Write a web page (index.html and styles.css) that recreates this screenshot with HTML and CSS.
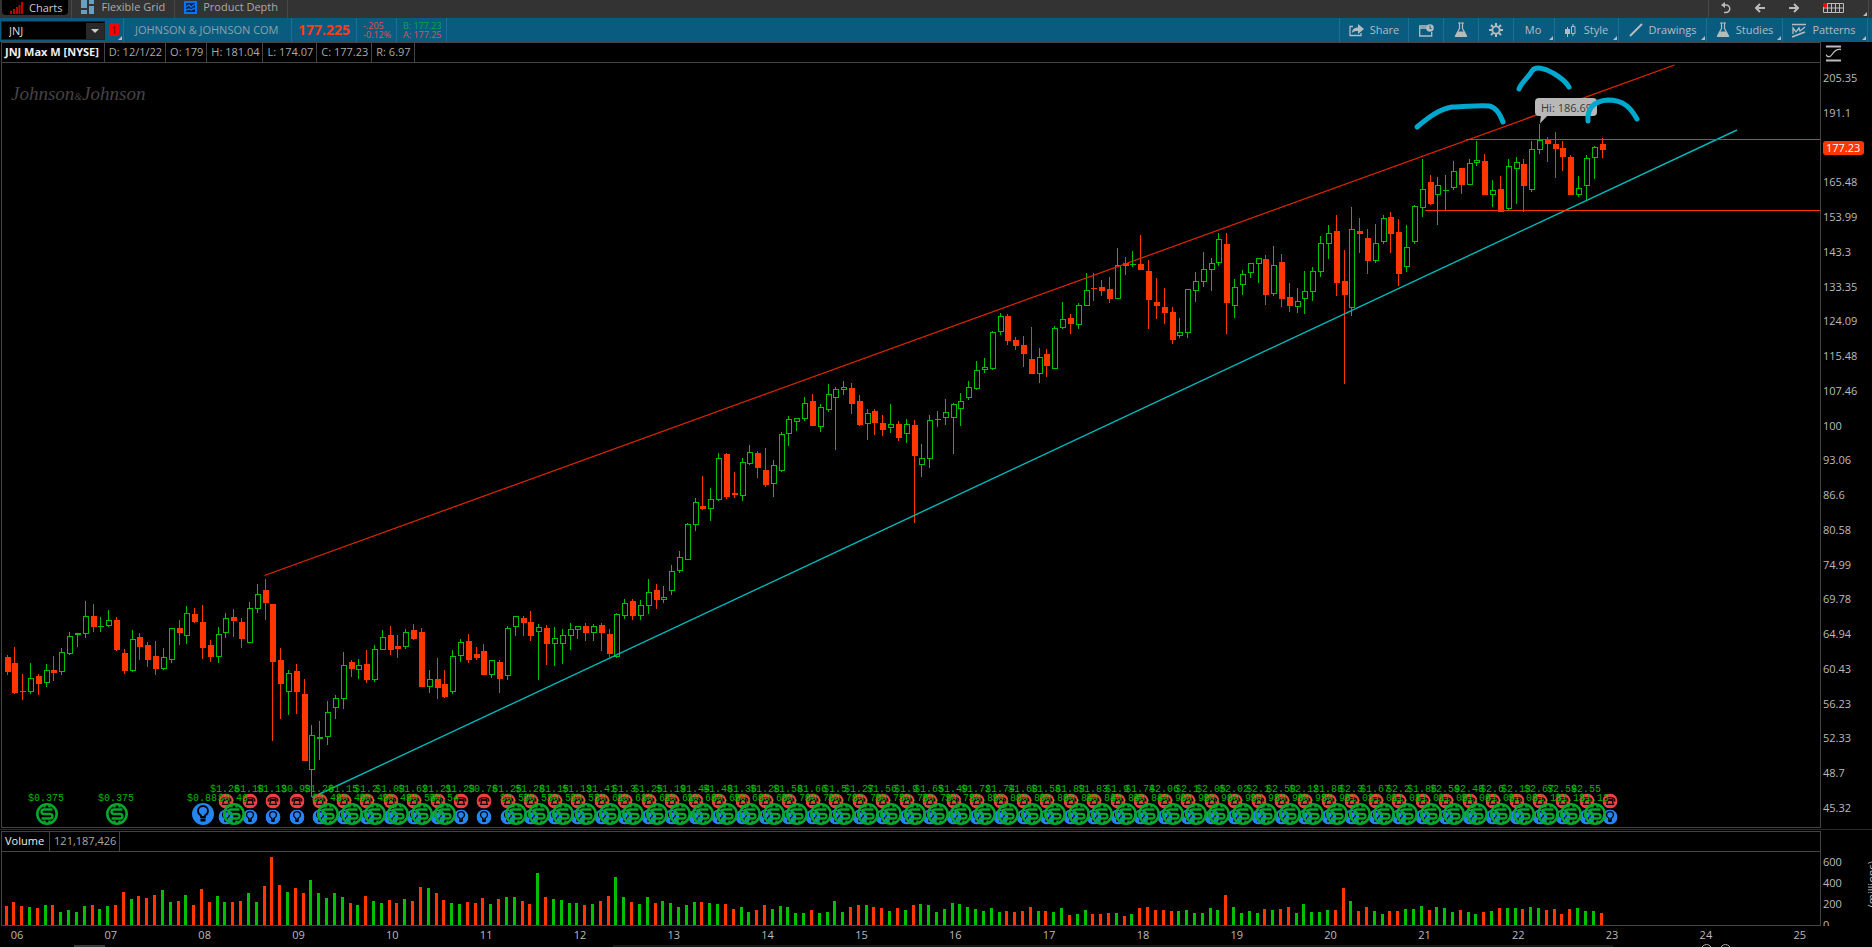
FILE: index.html
```html
<!DOCTYPE html>
<html lang="en">
<head>
  <meta charset="UTF-8">
  <title>JNJ - Charts</title>
  <meta name="viewport" content="width=device-width, initial-scale=1.0">
  <link rel="stylesheet" href="styles.css">
</head>
<body>
  <!-- shared icons -->
  <svg class="sprite" aria-hidden="true">
    <symbol id="flask" viewBox="0 0 14 16">
      <path d="M4 1h6M5.500 1.500v5L1.500 14h11L8.500 6.500v-5" fill="none" stroke="currentColor" stroke-width="1.200"/>
      <path d="M4 9.500h6l3 5.500H1z" fill="currentColor"/>
    </symbol>
    <symbol id="dividend" viewBox="-11 -11 22 22">
      <circle r="9.700" fill="none" stroke="#04a82c" stroke-width="2.600"/>
      <path d="M5.500 -4.500H-3Q-5.500 -4.500 -5.500 -2.300T-3 0H3Q5.500 0 5.500 2.300T3 4.500H-5.500M-2.500 -9v2.500M2.500 -9v2.500M-2.500 6.500v2.500M2.500 6.500v2.500" fill="none" stroke="#04a82c" stroke-width="2.400"/>
    </symbol>
    <symbol id="bulb" viewBox="-11 -11 22 22">
      <circle r="11" fill="#2484f0"/>
      <path d="M-2 3V1.500C-4.500 0 -5 -2 -5 -3A5 5 0 0 1 5 -3C5 -2 4.500 0 2 1.500V3z" fill="none" stroke="#000" stroke-width="1.800"/>
      <path d="M-2.500 4.500h5v3h-5z" fill="#000"/>
    </symbol>
    <symbol id="phone" viewBox="-11 -11 22 22">
      <circle r="11" fill="#ee4040"/>
      <path d="M-7 -2C-6 -6 6 -6 7 -2V0H4V-2H-4V0H-7zM-5 5L-3 -1H3L5 5z" fill="none" stroke="#1a0000" stroke-width="1.800"/>
    </symbol>
  </svg>

  <header class="topbar">
    <nav class="tabs">
      <a class="tab active" href="#">
        <svg width="13" height="12" viewBox="0 0 13 12"><path d="M1 12V9M4 12V7M7 12V5M9.500 12V3M12 12V0" stroke="#c00000" stroke-width="2"/></svg>
        Charts
      </a>
      <a class="tab" href="#">
        <svg width="14" height="14" viewBox="0 0 14 14" fill="#6a9fc0"><path d="M0 0h6v8H0zM8 0h5v4H8zM0 10h6v4H0zM8 6h5v8H8z"/></svg>
        Flexible Grid
      </a>
      <a class="tab" href="#">
        <svg width="13" height="13" viewBox="0 0 13 13"><rect x="1" y="1" width="11" height="11" fill="#04204c" stroke="#0a74f0" stroke-width="2"/><path d="M2 6l3-2 2 2 4-3M2 9l3-1 2 1 4-2" fill="none" stroke="#0a74f0" stroke-width="1.500"/></svg>
        Product Depth
      </a>
    </nav>
    <div class="history">
      <button aria-label="Undo"><svg width="10" height="12" viewBox="0 0 10 12"><path d="M2 3h3a3.500 3.500 0 0 1 0 7.500H3" fill="none" stroke="#bbb" stroke-width="1.500"/><path d="M0 3l4-3v6z" fill="#bbb"/></svg></button>
      <button aria-label="Back"><svg width="10" height="10" viewBox="0 0 10 10"><path d="M1 5h9M5 1L1 5l4 4" fill="none" stroke="#bbb" stroke-width="2"/></svg></button>
      <button aria-label="Forward"><svg width="10" height="10" viewBox="0 0 10 10"><path d="M0 5h9M5 1l4 4-4 4" fill="none" stroke="#bbb" stroke-width="2"/></svg></button>
      <button class="layout corner" aria-label="Grid layout"><svg width="21" height="10" viewBox="0 0 21 10"><path d="M.5 .5h20v9H.5zM.5 5h20M4.500 .5v9M8.500 .5v9M12.500 .5v9M16.500 .5v9" fill="none" stroke="#bbb"/><path d="M0 0h4v4H0z" fill="#f00"/></svg></button>
    </div>
  </header>

  <div class="toolbar">
    <div class="symbol-box">
      <input type="text" value="JNJ" aria-label="Symbol">
      <button aria-label="Choose symbol"></button>
    </div>
    <button class="link-badge corner"><span>1</span></button>
    <div class="company">JOHNSON &amp; JOHNSON COM</div>
    <div class="last">177.225</div>
    <div class="quote down"><span>-.205</span><span>-0.12%</span></div>
    <div class="quote wide"><span class="bid">B: 177.23</span><span class="ask">A: 177.25</span></div>

    <div class="tools">
      <button class="share"><svg width="15" height="13" viewBox="0 0 15 13"><path d="M4 2.500H1v9h11V9" fill="none" stroke="currentColor" stroke-width="1.300"/><path d="M3 9c0-4 3-5.500 6-5.500V0l6 5-6 5V7C6 7 4 7.500 3 9z" fill="currentColor"/></svg>Share</button>
      <button class="square" aria-label="Calendar"><svg width="15" height="13" viewBox="0 0 15 13"><path d="M8 2H.7v10h12V8M1 4h7" fill="none" stroke="currentColor" stroke-width="1.300"/><circle cx="11" cy="4" r="3.800" fill="currentColor"/><path d="M11 1.500V4.500h1.500" fill="none" stroke="#0a5b80"/></svg></button>
      <button class="square" aria-label="Edit studies"><svg width="14" height="16"><use href="#flask"/></svg></button>
      <button class="square" aria-label="Settings"><svg width="14" height="14" viewBox="-7 -7 14 14"><circle r="3.600" fill="none" stroke="currentColor" stroke-width="1.800"/><path d="M0-7v3M0 7V4M-7 0h3M7 0H4M-5-5l2 2M5 5L3 3M-5 5l2-2M5-5L3-3" stroke="currentColor" stroke-width="2"/></svg></button>
      <button class="corner period">Mo</button>
      <button class="corner style"><svg width="11" height="13" viewBox="0 0 11 13"><path d="M2.500 3v10M8 0v3M8 9v3" stroke="currentColor"/><path d="M0 5h5v5H0z" fill="currentColor"/><path d="M6.500 2.500h3.500v7H6.500z" fill="none" stroke="currentColor"/></svg>Style</button>
      <button class="corner drawings"><svg width="14" height="14" viewBox="0 0 14 14"><path d="M1 13L13 1" stroke="currentColor" stroke-width="2"/></svg>Drawings</button>
      <button class="corner studies"><svg width="14" height="16"><use href="#flask"/></svg>Studies</button>
      <button class="corner patterns"><svg width="14" height="15" viewBox="0 0 14 15"><path d="M0 1.500h14M0 14l13-5" stroke="currentColor" stroke-width="1.700"/><path d="M1 11V5l3 4 3-4 1 3 5-4" fill="none" stroke="currentColor" stroke-width="1.300"/></svg>Patterns</button>
    </div>
  </div>

  <main>
    <section class="row price-row">
      <div class="pane">
        <div class="pane-head">
          <strong>JNJ Max M [NYSE]</strong>
          <span>D: 12/1/22</span><span>O: 179</span><span>H: 181.04</span><span>L: 174.07</span><span>C: 177.23</span><span>R: 6.97</span>
        </div>
        <svg id="price" class="plot" viewBox="2 63 1818 764" preserveAspectRatio="none" role="img" aria-label="JNJ monthly price">
          <text class="brand" x="11" y="100">Johnson<tspan class="amp">&amp;</tspan>Johnson</text>
          <g id="candles" shape-rendering="crispEdges"></g>
          <g class="trend">
            <path class="resistance" d="M264.500 575.500L1674.500 65"/>
            <path class="support" d="M312 797.500L1737 130"/>
            <path class="level" d="M1466 139.500H1820M1425 210.500H1820"/>
          </g>
          <g id="events"></g>
          <g class="callout">
            <path d="M1540 123.500L1541 115H1548z"/>
            <rect x="1535" y="98" width="62" height="18" rx="4"/>
            <text x="1541" y="112">Hi: 186.69</text>
          </g>
          <g class="brush">
            <path d="M1417 127C1430 116 1440 109 1452 107C1466 107 1476 105 1489 106C1496 107 1500 114 1503 122"/>
            <path d="M1519 89C1521 83 1528 78 1532 71C1535 66 1545 68 1553 73C1560 77 1566 82 1569 87"/>
            <path d="M1588 121C1587 108 1594 101 1608 100C1624 100 1631 108 1637 119"/>
          </g>
        </svg>
      </div>
      <div class="axis">
        <button class="axis-tool" aria-label="Price axis settings"><svg width="15" height="17" viewBox="0 0 15 17"><path d="M0 1.500h15M0 15.500h15" stroke="#bbb" stroke-width="2"/><path d="M0 9.500c1 3 4 3 6 0s5-6 9-5" fill="none" stroke="#bbb" stroke-width="1.300"/></svg></button>
        <div class="scale">
          <span>205.35</span><span>191.1</span><span class="current">177.23</span><span>165.48</span><span>153.99</span><span>143.3</span><span>133.35</span><span>124.09</span><span>115.48</span><span>107.46</span><span>100</span><span>93.06</span><span>86.6</span><span>80.58</span><span>74.99</span><span>69.78</span><span>64.94</span><span>60.43</span><span>56.23</span><span>52.33</span><span>48.7</span><span>45.32</span>
        </div>
      </div>
    </section>

    <div class="splitter"></div>

    <section class="row volume-row">
      <div class="pane">
        <div class="pane-head"><b>Volume</b><span>121,187,426</span></div>
        <svg id="volume" class="plot" viewBox="2 852 1818 73" preserveAspectRatio="none" shape-rendering="crispEdges" role="img" aria-label="Volume"></svg>
      </div>
      <div class="axis volume-axis">
        <span>600</span><span>400</span><span>200</span><span>0</span>
        <div class="unit">(millions)</div>
      </div>
    </section>

    <div class="years" id="years"></div>
  </main>

  <footer>
    <div class="thumb"></div>
    <div class="track"></div>
    <button aria-label="Zoom in"></button>
    <button aria-label="Zoom out"></button>
  </footer>

  <script src="script.js"></script>
</body>
</html>
```
FILE: styles.css
```css
:root {
  --up: #00c000;
  --down: #ff3600;
  --bar: #0a5b80;
  --line: #444444;
  --text: #aaaaaa;
}

* { box-sizing: border-box; margin: 0; padding: 0; }
body {
  font-family: "Open Sans", "Noto Sans", sans-serif;
  font-size: 11px;
  line-height: 14px;
  background: #000;
  color: var(--text);
  height: 100vh;
  display: flex;
  flex-direction: column;
  overflow: hidden;
}

button, input { font: inherit; color: inherit; background: none; border: none; }
button { display: flex; align-items: center; justify-content: center; cursor: pointer; }
a { color: inherit; text-decoration: none; }
svg { flex-shrink: 0; }
.sprite { position: absolute; width: 0; height: 0; }

.topbar {
  height: 18px;
  display: flex;
  justify-content: space-between;
  background: #333;
}

.tabs { display: flex; }
.tab {
  display: flex;
  align-items: center;
  gap: 6px;
  padding: 0 9px 4px;
  height: 18px;
  border-right: 1px solid #484848;
}
.tab.active {
  height: 15px;
  padding: 0 6px 0 8px;
  margin: 0 3px 0 2px;
  background: #000;
  border: none;
  border-radius: 0 0 4px 4px;
  color: #ccc;
}
.tab.active + .tab { border-left: 1px solid #484848; }

.history {
  display: flex;
  margin-right: 3px;
  border-left: 1px solid #484848;
  border-right: 1px solid #484848;
}
.history button { width: 34px; padding-bottom: 3px; }
.history .layout { width: 57px; padding-right: 12px; }

.toolbar {
  height: 24px;
  display: flex;
  align-items: stretch;
  background: var(--bar);
}
.toolbar > div { display: flex; align-items: center; }

.symbol-box {
  width: 104px;
  margin: 3px 0 2px 1px;
  background: #000;
  border: 1px solid #222;
}
.symbol-box input { width: 84px; padding-left: 7px; color: #ddd; }
.symbol-box button { width: 18px; height: 16px; background: #292929; }
.symbol-box button::after {
  content: "";
  border: 4px solid transparent;
  border-top-color: #ccc;
  border-bottom: none;
}

.corner { position: relative; }
.corner::after {
  content: "";
  position: absolute;
  right: 1px;
  bottom: 2px;
  border: 2px solid transparent;
  border-right-color: #bbb;
  border-bottom-color: #bbb;
}

.link-badge { width: 18px; padding-bottom: 2px; }
.link-badge span {
  width: 10px;
  height: 13px;
  background: #f00;
  color: #600;
  border-radius: 2px;
  font-size: 10px;
}

.toolbar .company {
  border-left: 1px solid #1b6f96;
  padding-left: 11px;
  width: 168px;
  color: #8fa0a8;
  white-space: nowrap;
}
.toolbar .last {
  border-left: 1px solid #1b6f96;
  width: 65px;
  padding-left: 6px;
  font-size: 14px;
  font-weight: bold;
  color: #ff3c14;
}
.toolbar .quote {
  border-left: 1px solid #1b6f96;
  width: 40px;
  padding-left: 6px;
  flex-direction: column;
  align-items: flex-start;
  justify-content: center;
  font-size: 9px;
  line-height: 9px;
}
.toolbar .wide { width: 51px; border-right: 1px solid #1b6f96; }
.down, .ask { color: #e0504c; }
.bid { color: #08a83c; }

.toolbar .tools {
  align-items: stretch;
  margin-left: auto;
  margin-right: 4px;
  border-right: 1px solid #1b6f96;
}
.tools button {
  border-left: 1px solid #1b6f96;
  color: #b4bcc0;
  gap: 6px;
}
.tools .share { width: 69px; }
.tools .square { width: 35px; }
.tools .period { width: 41px; padding-right: 2px; }
.tools .style { width: 64px; gap: 8px; }
.tools .drawings { width: 88px; }
.tools .studies { width: 76px; }
.tools .patterns { width: 85px; padding-right: 2px; }

main {
  flex: 1;
  min-height: 0;
  display: flex;
  flex-direction: column;
}
.row { display: flex; padding-left: 1px; }
.price-row { flex: 1; min-height: 0; }
.volume-row { height: 95px; }

.pane {
  flex: 1;
  min-width: 0;
  display: flex;
  flex-direction: column;
  border: 1px solid var(--line);
}
.pane-head {
  display: flex;
  height: 20px;
  border-bottom: 1px solid var(--line);
  line-height: 18px;
}
.pane-head > * { padding: 0 3px 0 4px; border-right: 1px solid var(--line); }
.pane-head strong, .pane-head b { color: #eee; padding: 0 5px 0 3px; }
.pane-head b { font-weight: normal; }
.plot { display: block; flex: 1; min-height: 0; width: 100%; }

.axis { width: 51px; padding-left: 2px; color: #bbb; }
.price-row .axis { display: flex; flex-direction: column; }
.axis-tool { width: 15px; height: 17px; margin: 3px 0 0 3px; }
.scale {
  flex: 1;
  display: flex;
  flex-direction: column;
  justify-content: space-between;
  align-items: flex-start;
  padding: 9px 0 13px;
}
.scale .current {
  background: var(--down);
  color: #fff;
  border-radius: 3px;
  padding: 0 4px 0 3px;
}

.splitter { height: 3px; border-top: 1px solid #000; border-bottom: 1px solid #000; background: #2a2a2a; }

.volume-axis {
  position: relative;
  display: flex;
  flex-direction: column;
  gap: 7px;
  padding-top: 24px;
  overflow: hidden;
}
.unit {
  position: absolute;
  right: -7px;
  top: 30px;
  writing-mode: vertical-rl;
  transform: rotate(180deg);
}

.years {
  height: 18px;
  display: flex;
  justify-content: space-between;
  margin-right: 62px;
  padding: 2px 0 0 7px;
  color: #bbb;
}
.years span { width: 20px; text-align: center; }

footer {
  height: 3px;
  display: flex;
  overflow: hidden;
}
.thumb { width: 31px; margin-left: 74px; border-bottom: 2px solid #3a3a3a; }
.track { flex: 1; margin-left: 508px; margin-right: 88px; border-bottom: 2px solid #161616; }
footer button {
  width: 11px;
  height: 11px;
  margin-right: 8px;
  border: 1px solid #aaa;
  border-radius: 6px;
}
footer button:last-child { margin-right: 141px; }

/* chart drawing */
.up { fill: none; stroke: var(--up); }
.down-bar { fill: var(--down); }
.up-bar { fill: var(--up); }
.trend path { fill: none; }
.trend .resistance { stroke: #e02800; stroke-width: 1.2; }
.trend .support { stroke: #00b8b8; stroke-width: 1.4; }
.trend .level { stroke: #ff3000; }
.brush path {
  fill: none;
  stroke: #00a8d0;
  stroke-width: 5;
  stroke-linecap: round;
}
.callout path, .callout rect { fill: #b8b8b8; }
.callout text { fill: #383838; }
.brand {
  font-family: "Liberation Serif", serif;
  font-style: italic;
  font-size: 19px;
  fill: #444;
}
.brand .amp { font-size: 10px; }
#events text {
  font-family: "Liberation Mono", monospace;
  font-size: 10px;
  text-anchor: middle;
  fill: #00b800;
}
```
FILE: script.js
```js
// one entry per month, Dec 2005 - Dec 2022: direction, high, body top, body bottom, low
const months = `
r655,657,672,675 r647,663,693,694 r674,691,692,700 g663,678,692,694 r674,676,684,695 g664,670,683,687
r656,670,673,681 g648,652,672,675 g632,636,654,655 g633,633,635,647 g601,616,634,638 r604,616,627,632
g617,626,627,632 g610,620,626,627 r617,620,650,651 r649,653,671,674 g630,639,671,672 r633,637,647,660
r642,645,660,667 r641,656,669,675 g648,657,669,670 g628,628,660,663 r620,628,633,645 g606,613,636,644
r608,614,622,623 r605,622,648,659 r640,645,657,662 g627,634,657,663 g613,618,633,638 r609,617,621,637
r618,622,639,648 g602,608,643,643 g584,594,609,613 r579,590,603,620 r604,604,662,741 r648,660,684,719
g670,673,692,715 r664,671,692,714 r679,694,761,761 g725,735,770,797 g721,737,739,760 g701,712,737,745
g695,698,708,719 g652,665,699,709 r660,662,669,677 g659,665,670,679 r650,664,680,683 g645,649,680,682
g630,637,650,650 r626,635,650,655 r635,646,649,658 g629,632,647,649 r624,630,639,640 r628,632,687,687
g670,679,687,693 r658,679,688,699 r670,684,697,698 g650,656,692,694 g639,642,656,662 r634,641,660,663
r647,654,658,660 r644,651,675,675 g660,660,675,678 r660,662,679,693 g626,628,676,680 g616,616,627,636
r616,618,623,636 r611,622,636,641 g624,627,632,680 r625,628,644,665 g627,638,644,666 g629,635,644,664
g623,629,636,650 g626,626,630,639 r623,626,633,641 g624,626,633,641 r623,625,633,651 r629,634,654,657
g613,614,657,658 g599,603,616,619 r599,601,616,620 g600,605,616,620 g579,592,606,614 r584,590,600,609
g586,597,600,603 g565,571,591,595 g551,557,571,573 g523,524,560,560 g498,502,525,531 r476,506,509,510
g488,499,509,521 g453,458,500,501 r453,454,497,499 r472,493,495,498 g458,462,496,501 g445,452,464,465
r451,453,468,478 r448,470,485,487 g460,465,484,497 g432,434,471,472 g416,419,434,446 g418,418,422,431
g397,403,419,421 r394,401,426,426 g404,407,427,432 g384,394,410,412 g387,389,398,450 g381,387,390,395
r383,388,404,414 r395,401,425,426 g409,413,424,440 r409,411,423,435 r415,423,430,436 g404,424,428,433
r421,424,438,441 g419,424,434,443 r420,425,456,523 g444,458,465,477 g415,420,459,468 g411,419,420,427
g399,412,418,425 g403,404,418,454 g393,401,409,426 g381,387,398,400 g361,370,389,390 g358,367,370,373
g331,332,369,370 g313,316,332,335 r314,316,341,345 r337,340,346,350 r336,345,354,367 r327,359,374,374
g348,357,374,383 r349,354,366,377 g326,328,369,369 g302,319,328,329 r314,318,324,334 g303,305,325,329
g273,290,306,306 r273,288,289,301 r280,287,291,296 r277,289,299,303 g248,265,299,299 r257,263,266,275
g251,264,265,267 r235,264,270,270 r260,271,300,329 r278,302,306,319 r288,307,313,324 r307,312,340,344
g318,332,336,338 g289,289,333,338 g272,281,291,302 g252,269,282,287 g258,263,270,291 g233,239,263,266
r233,244,303,334 g279,287,306,318 g270,274,285,295 g263,263,273,278 g258,258,264,283 r255,259,295,305
g246,265,294,296 r254,262,299,307 r283,297,306,312 g288,301,307,313 g271,291,299,314 g267,271,292,301
g236,243,272,277 g225,233,244,259 r215,231,283,296 r250,281,295,384 g207,229,308,316 r218,231,234,253
r229,238,261,274 g224,243,261,263 g215,218,242,244 r212,217,234,253 r219,232,274,286 g225,247,267,272
g205,206,242,244 g159,189,208,217 r175,182,204,205 g177,185,195,225 g175,190,191,210 g161,171,188,190
r168,168,185,194 g159,163,185,185 g141,160,163,166 r154,161,195,195 g180,190,195,207 r176,189,212,212
g159,166,209,210 g157,162,169,204 r159,164,186,212 g141,149,190,192 g124,140,150,154 r137,140,144,162
r132,144,149,178 r141,148,157,171 r155,157,195,195 g176,188,195,197 g155,158,186,201 g146,147,158,179
r138,144,150,158`.trim().split(/\s+/);

const volumes = [
  19,23,19,18,17,20,20,13,15,13,19,20,16,19,20,33,26,29,27,30,35,23,24,30,20,36,23,29,23,23,24,32,23,39,68,
  40,33,37,32,45,32,27,32,28,22,20,29,24,22,25,22,26,24,38,37,32,25,22,21,23,22,27,21,26,28,28,24,21,52,28,
  26,25,22,22,20,21,24,29,48,28,23,21,28,22,24,22,18,20,23,23,22,21,21,16,18,13,15,20,16,19,18,12,12,15,12,
  13,24,13,18,20,20,18,17,14,17,15,20,21,20,13,16,22,21,18,16,14,17,13,14,13,14,18,14,14,13,17,10,11,15,11,
  11,12,12,9,11,17,18,15,15,14,14,15,12,12,17,15,30,18,12,14,12,16,15,16,18,12,21,13,13,15,15,37,24,14,18,
  14,11,14,14,16,16,19,15,18,17,13,15,13,11,13,14,17,17,17,16,18,17,15,16,11,16,17,14,14,12
];

// quarterly earnings, first one in month 28
const earnings = [
  1.26,1.18,1.13,0.93,1.26,1.15,1.2,1.03,1.62,1.21,1.23,0.76,1.25,1.28,1.15,1.13,1.41,1.3,1.25,1.19,
  1.44,1.48,1.36,1.28,1.58,1.66,1.5,1.27,1.56,1.9,1.65,1.49,1.72,1.74,1.68,1.58,1.83,1.83,1.9,1.74,
  2.06,2.1,2.05,2.02,2.1,2.58,2.12,1.88,2.3,1.67,2.2,1.86,2.59,2.48,2.6,2.13,2.67,2.59,2.55
];

// dividend per share by year, raised every May from 2009
const dividends = ["0.49","0.54","0.57","0.61","0.66","0.70","0.75","0.80","0.84","0.90","0.95","1.01","1.06","1.13"];

const left = i => Math.floor(5.05 + 7.8188 * i);
const rect = (cls, x, y, w, h) => `<rect class="${cls}" x="${x}" y="${y}" width="${w}" height="${h}"/>`;

let candles = "";
let bars = "";
months.forEach((m, i) => {
  const green = m[0] === "g";
  const [high, top, bottom, low] = m.slice(1).split(",").map(Number);
  const x = left(i);
  const fill = green ? "up-bar" : "down-bar";
  if (!green || bottom - top < 3) {
    candles += rect(fill, x + 2, high, 1, low - high) + rect(fill, x, top, 6, bottom - top);
  } else {
    candles += rect(fill, x + 2, high, 1, top - high) + rect(fill, x + 2, bottom, 1, low - bottom);
    candles += rect("up", x + 0.5, top + 0.5, 5, bottom - top - 1);
  }
  bars += rect(fill, x, 925 - volumes[i], 3, volumes[i]);
});
document.getElementById("candles").innerHTML = candles;
document.getElementById("volume").innerHTML = bars;

let icons = "";
let labels = "";
const icon = (name, i, y, r) => {
  icons += `<use href="#${name}" x="${left(i) + 3 - r}" y="${y - r}" width="${2 * r}" height="${2 * r}"/>`;
};
const label = (value, i, y) => {
  labels += `<text x="${left(i) + 2}" y="${y}">$${value}</text>`;
};

for (let i = 28; i <= 205; i += 3) {
  icon("phone", i, 801, 7.5);
  icon("bulb", i, 817, 7.5);
  if (i < 205) label(earnings[(i - 28) / 3], i, 792);
}
icon("bulb", 25, 814, 11);
label("0.88", 25, 801);
[[5, "0.375"], [14, "0.375"], [29, "0.46"]].forEach(([i, value]) => {
  icon("dividend", i, 814, 11);
  label(value, i, 801);
});
for (let i = 41; i <= 203; i += 3) {
  if (i === 59 || i === 62) continue;
  icon("dividend", i, 814, 11);
  label(dividends[Math.floor((i - 41) / 12)], i, 801);
}
document.getElementById("events").innerHTML = icons + labels;

for (let y = 6; y <= 25; y++) {
  const span = document.createElement("span");
  span.textContent = String(y).padStart(2, "0");
  document.getElementById("years").append(span);
}
```
